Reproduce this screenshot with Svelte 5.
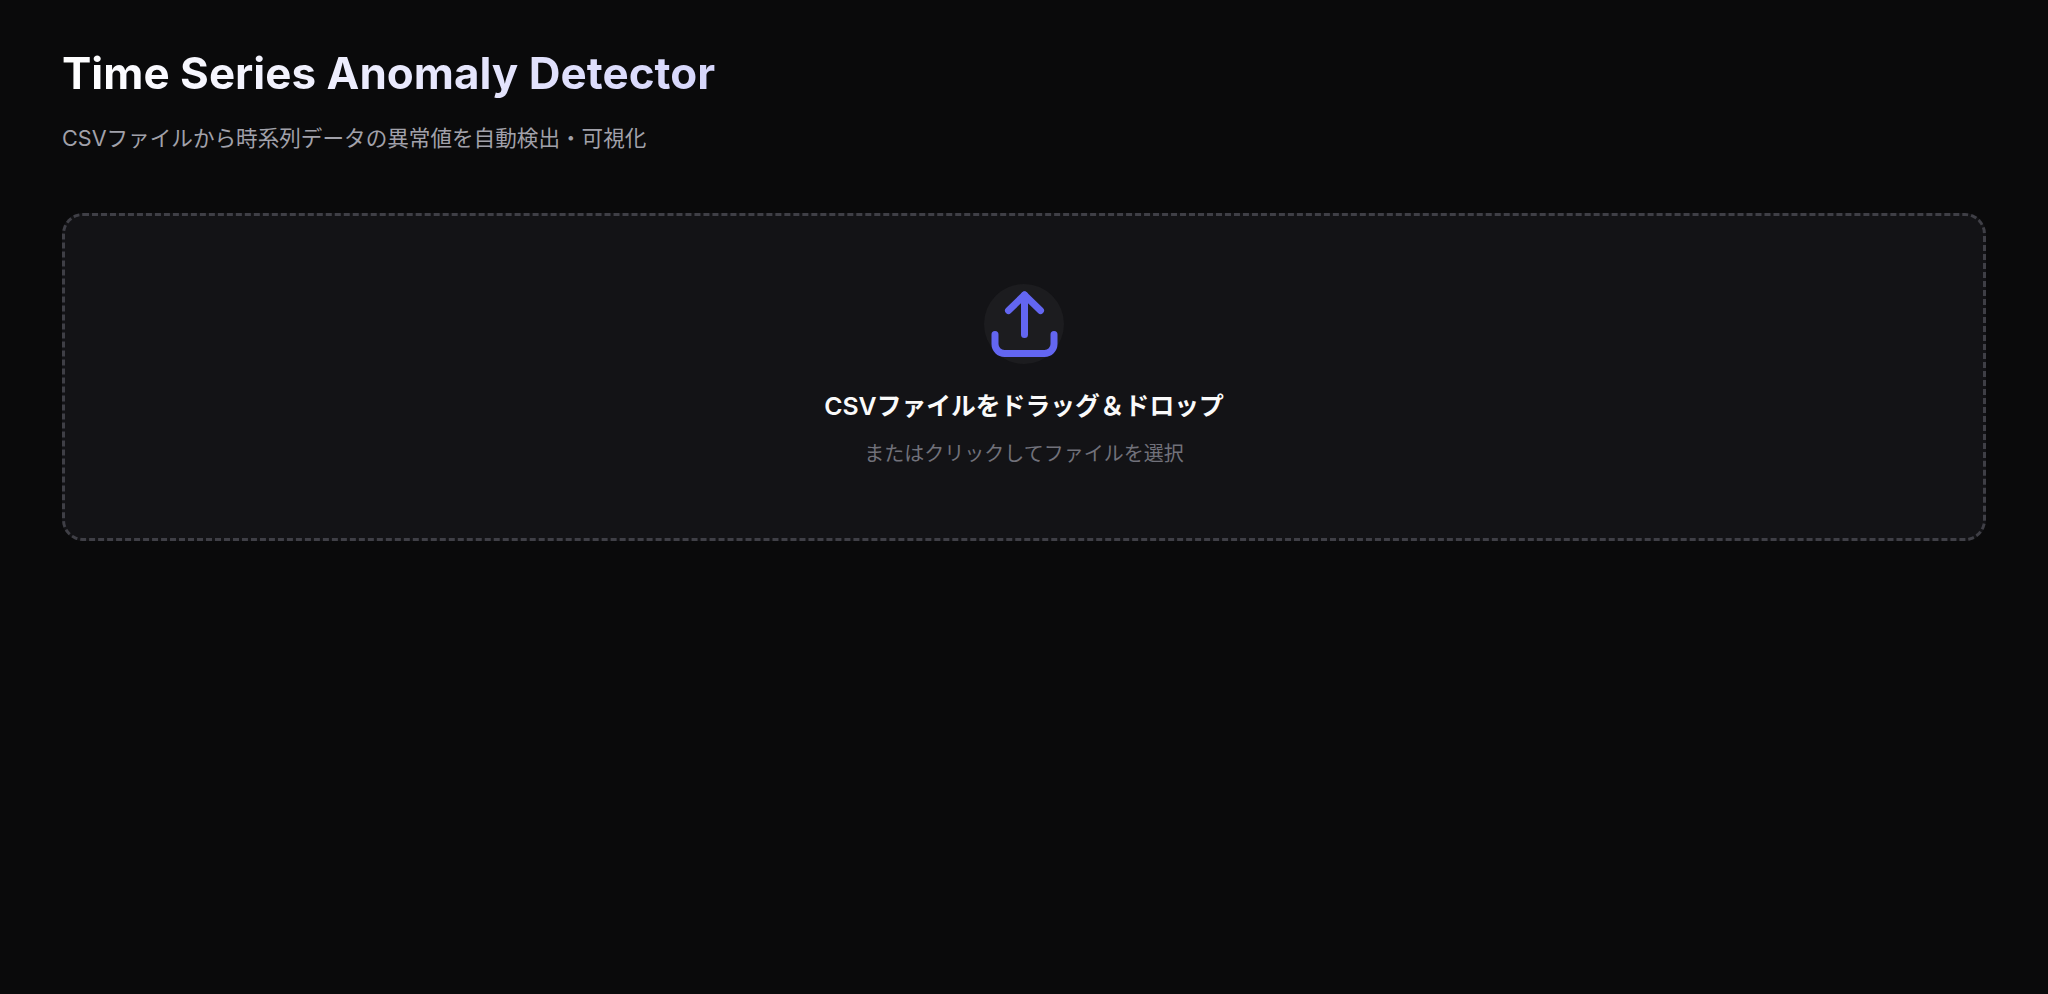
<script>
  const title = 'Time Series Anomaly Detector';
</script>

<main class="page">
  <header class="head">
    <h1>{title}</h1>
    <p class="sub">CSVファイルから時系列データの異常値を自動検出・可視化</p>
  </header>
  <section class="drop">
    <div class="icon">
      <svg width="80" height="80" viewBox="0 0 80 80" fill="none" stroke="#6366f1" stroke-width="7" stroke-linecap="round" stroke-linejoin="round">
        <path d="M40.5 50.5V11" />
        <path d="M24.5 26.5L40.5 11L56.5 26.5" />
        <path d="M11 50.5V60a9.5 9.5 0 0 0 9.5 9.5H60.5a9.5 9.5 0 0 0 9.5-9.5V50.5" />
      </svg>
    </div>
    <h2>CSVファイルをドラッグ＆ドロップ</h2>
    <p class="hint">またはクリックしてファイルを選択</p>
  </section>
</main>

<style>
  :global(body) {
    margin: 0;
    background: #0a0a0b;
  }
  .page {
    min-height: 994px;
    box-sizing: border-box;
    padding: 47px 62px;
    font-family: Inter, "Noto Sans CJK JP", sans-serif;
  }
  .head {
    margin-bottom: 61px;
  }
  h1 {
    margin: 0 0 25px;
    font-size: 44px;
    line-height: 53px;
    font-weight: 700;
    width: fit-content;
    background: linear-gradient(90deg, #ffffff, #d6d6fb);
    background-clip: text;
    -webkit-background-clip: text;
    color: transparent;
  }
  .sub {
    margin: 0;
    font-size: 21.6px;
    line-height: 27px;
    color: #a1a1aa;
  }
  .drop {
    box-sizing: border-box;
    height: 328px;
    border: 3px dashed #3f3f46;
    border-radius: 21px;
    background: #131316;
    display: flex;
    flex-direction: column;
    align-items: center;
    padding-top: 68px;
  }
  .icon {
    width: 80px;
    height: 80px;
    border-radius: 50%;
    background: #1c1c1f;
  }
  .icon svg {
    display: block;
  }
  h2 {
    margin: 26px 0 0;
    font-size: 24.8px;
    line-height: 32px;
    font-weight: 600;
    color: #fafafa;
  }
  .hint {
    margin: 18px 0 0;
    font-size: 20px;
    line-height: 29px;
    color: #71717a;
  }
</style>
